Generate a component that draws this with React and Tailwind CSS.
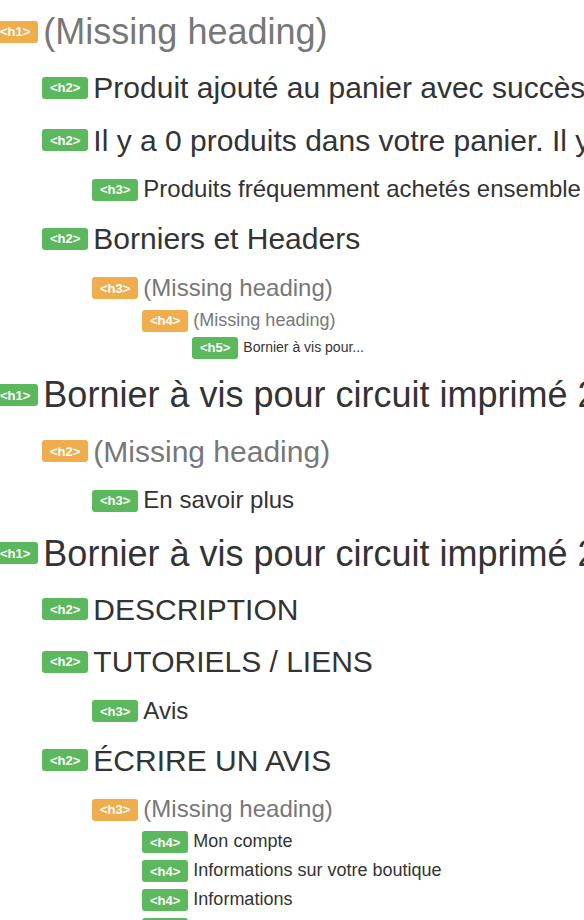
import clsx from 'clsx';

const HEADINGS = [
  { level: 1, missing: true },
  { level: 2, text: 'Produit ajouté au panier avec succès' },
  {
    level: 2,
    text: 'Il y a 0 produits dans votre panier. Il y a 1 produit dans votre panier.',
  },
  { level: 3, text: 'Produits fréquemment achetés ensemble' },
  { level: 2, text: 'Borniers et Headers' },
  { level: 3, missing: true },
  { level: 4, missing: true },
  { level: 5, text: 'Bornier à vis pour...' },
  { level: 1, text: 'Bornier à vis pour circuit imprimé 2 pôles' },
  { level: 2, missing: true },
  { level: 3, text: 'En savoir plus' },
  { level: 1, text: 'Bornier à vis pour circuit imprimé 2 pôles' },
  { level: 2, text: 'DESCRIPTION' },
  { level: 2, text: 'TUTORIELS / LIENS' },
  { level: 3, text: 'Avis' },
  { level: 2, text: 'ÉCRIRE UN AVIS' },
  { level: 3, missing: true },
  { level: 4, text: 'Mon compte' },
  { level: 4, text: 'Informations sur votre boutique' },
  { level: 4, text: 'Informations' },
  { level: 4, text: 'Newsletter' },
];

// heading scale: indent / top margin / line box / font size
const LEVEL = {
  1: 'ml-[-8px] mt-[20px] h-[39.6px] text-[36px]',
  2: 'ml-[42px] mt-[20px] h-[32.5px] text-[30px]',
  3: 'ml-[92px] mt-[20px] h-[26px] text-[24px]',
  4: 'ml-[142px] mt-[10px] h-[19px] text-[18px]',
  5: 'ml-[192px] mt-[10px] h-[15.4px] text-[14px]',
};

const BADGE_TEXT = {
  1: '<h1>',
  2: '<h2>',
  3: '<h3>',
  4: '<h4>',
  5: '<h5>',
};

function Badge({ level, missing }) {
  return (
    <span
      className={clsx(
        'inline-flex h-[22px] shrink-0 items-center rounded-[3px] px-[8px] text-[13px] font-bold leading-none text-white',
        missing ? 'bg-[#f0ad4e]' : 'bg-[#5cb85c]'
      )}
    >
      {BADGE_TEXT[level]}
    </span>
  );
}

export default function App() {
  return (
    <div className="h-[920px] w-[584px] overflow-hidden bg-white font-['Liberation_Sans',Arial,sans-serif]">
      <div className="pt-[12px]">
        {HEADINGS.map((h, i) => (
          <div
            key={i}
            className={clsx(
              'flex items-center gap-[5px] whitespace-nowrap leading-[1.1]',
              LEVEL[h.level],
              i === 0 && '!mt-0'
            )}
          >
            <Badge level={h.level} missing={h.missing} />
            <span className={h.missing ? 'text-[#777777]' : 'text-[#333333]'}>
              {h.missing ? '(Missing heading)' : h.text}
            </span>
          </div>
        ))}
      </div>
    </div>
  );
}
